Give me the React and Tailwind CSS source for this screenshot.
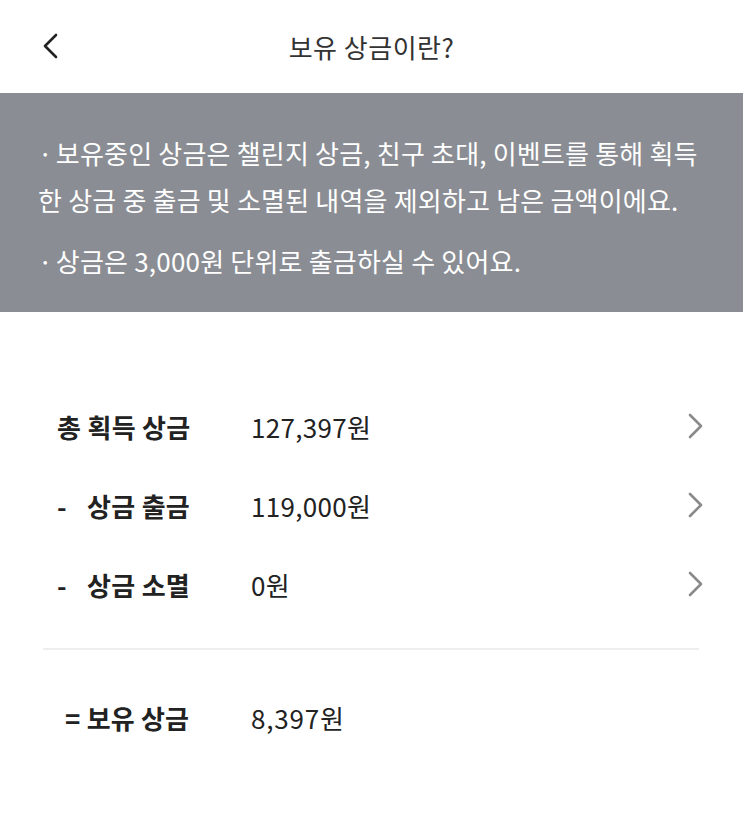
import React from 'react';

const font = { fontFamily: '"Noto Sans CJK KR", "Noto Sans", sans-serif' };

function Chevron({ dir = 'right', className = '' }) {
  const d = dir === 'right' ? 'M2 2 L13 13 L2 24' : 'M13 2 L2 13 L13 24';
  return (
    <svg viewBox="0 0 15 26" className={className} fill="none" stroke="currentColor" strokeWidth="2.6" strokeLinecap="round" strokeLinejoin="round">
      <path d={d} />
    </svg>
  );
}

const rows = [
  { sign: '', label: '총 획득 상금', value: '127,397원' },
  { sign: '-', label: '상금 출금', value: '119,000원' },
  { sign: '-', label: '상금 소멸', value: '0원' },
];

export default function App() {
  return (
    <div className="w-[743px] h-[814px] bg-white text-[#222]" style={font}>
      <header className="h-[93px] flex items-center relative px-[43px]">
        <Chevron dir="left" className="w-[15px] h-[26px] text-[#222] -mt-[1px]" />
        <h1 className="absolute left-0 right-0 text-center text-[26px] text-[#333] tracking-[0.5px] pointer-events-none -mt-[1px]">
          보유 상금이란?
        </h1>
      </header>

      <section className="bg-[#8a8d93] text-white text-[26px] tracking-[0.2px] pl-[38px] pt-[36px] h-[219px] whitespace-nowrap">
        <p className="leading-[47px]">
          <span className="[word-spacing:-3px]">· </span>보유중인 상금은 챌린지 상금, 친구 초대, 이벤트를 통해 획득
          <br />
          한 상금 중 출금 및 소멸된 내역을 제외하고 남은 금액이에요.
        </p>
        <p className="leading-[47px] mt-[14px]">
          <span className="[word-spacing:-3px]">· </span>상금은 3,000원 단위로 출금하실 수 있어요.
        </p>
      </section>

      <div className="px-[43px] pt-[91px]">
        <div className="flex flex-col gap-[33px]">
          {rows.map((r) => (
            <div key={r.label} className="flex items-center h-[46px]">
              <div className="w-[208px] flex items-center font-bold text-[26px] pl-[14px] tracking-[0.3px]">
                {r.sign && <span className="w-[30px]">{r.sign}</span>}
                <span>{r.label}</span>
              </div>
              <span className="flex-1 text-[26px] tracking-[0.3px]">{r.value}</span>
              <Chevron className="w-[15px] h-[26px] text-[#8a8a8a] mr-[-3px]" />
            </div>
          ))}
        </div>
        <div className="h-[2px] bg-[#eeeeee] mt-[41px] w-[656px]" />
        <div className="flex items-center h-[46px] mt-[44px]">
          <div className="w-[208px] font-bold text-[26px] pl-[22px] tracking-[0.2px]">= 보유 상금</div>
          <span className="text-[26px] tracking-[0.8px]">8,397원</span>
        </div>
      </div>
    </div>
  );
}
